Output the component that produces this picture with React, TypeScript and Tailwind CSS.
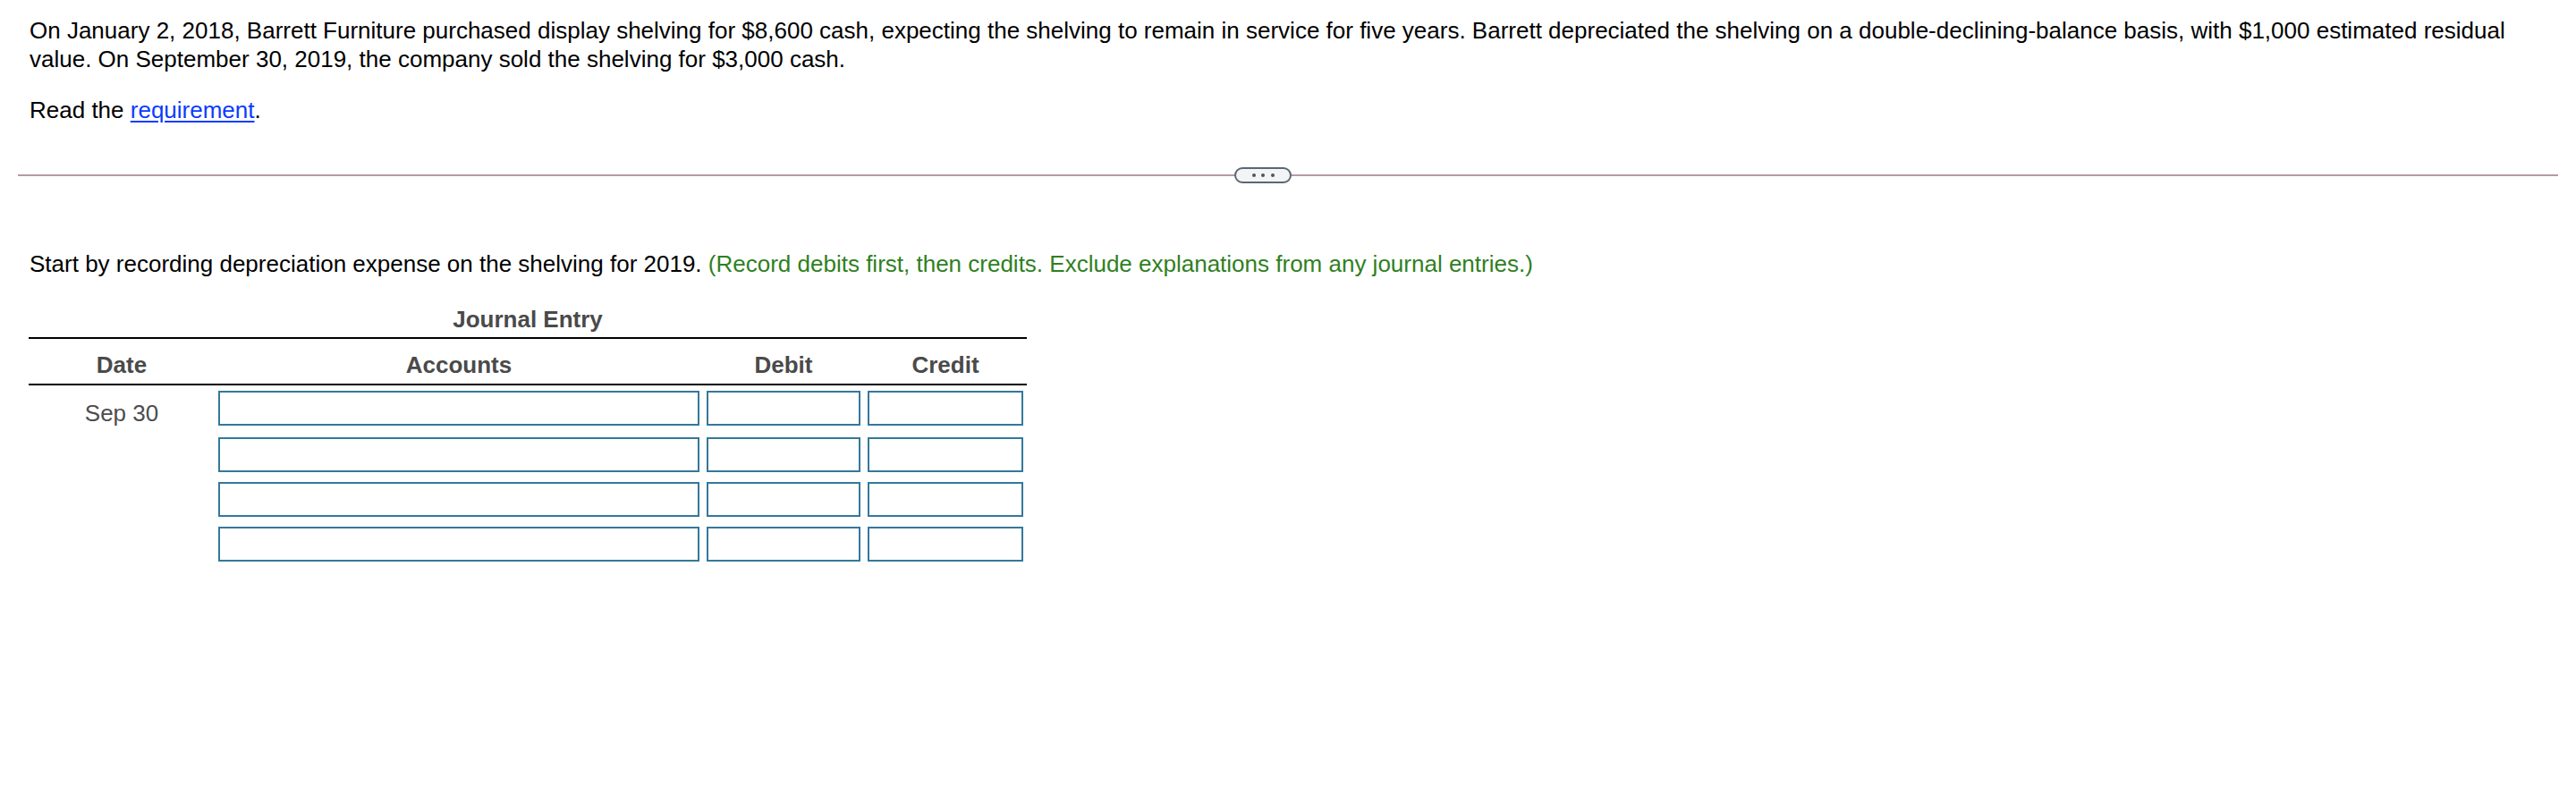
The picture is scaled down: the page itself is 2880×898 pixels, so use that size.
import * as React from 'react'

const rows = [0, 1, 2, 3]

const Box = ({ className }: { className: string }) => (
    <div className={`h-[39px] border-2 border-[#35789a] bg-white ${className}`} />
)

export default function App() {
    return (
        <div className="min-h-screen bg-white font-['Liberation_Sans',Arial,sans-serif] text-[26px] leading-[32px] text-black">
            <div className="pt-[18px] pl-[33px] pr-[32px]">
                <p>
                    On January 2, 2018, Barrett Furniture purchased display shelving for $8,600 cash, expecting the
                    shelving to remain in service for five years. Barrett depreciated the shelving on a
                    double-declining-balance basis, with $1,000 estimated residual value. On September 30, 2019, the
                    company sold the shelving for $3,000 cash.
                </p>
                <p className="mt-[25px]">
                    Read the{' '}
                    <a href="#" className="text-[#0a3cff] underline underline-offset-[3px]">
                        requirement
                    </a>
                    .
                </p>
            </div>

            <div className="mt-[47px] flex h-[20px] items-center pl-[20px] pr-[20px]">
                <div className="h-[2px] w-[1360px] bg-[#b49aa4]" />
                <button className="flex h-[18px] w-[64px] items-center justify-center gap-[6.5px] rounded-full border-2 border-[#5b6773] bg-[#f2f4f6]">
                    <span className="h-[4px] w-[4px] rounded-full bg-[#4b5563]" />
                    <span className="h-[4px] w-[4px] rounded-full bg-[#4b5563]" />
                    <span className="h-[4px] w-[4px] rounded-full bg-[#4b5563]" />
                </button>
                <div className="h-[2px] flex-1 bg-[#b49aa4]" />
            </div>

            <div className="mt-[73px] pl-[33px]">
                <p>
                    Start by recording depreciation expense on the shelving for 2019.{' '}
                    <span className="text-[#2f7f22]">
                        (Record debits first, then credits. Exclude explanations from any journal entries.)
                    </span>
                </p>
            </div>

            <div className="ml-[32px] mt-[30px] w-[1116px]">
                <div className="text-center font-bold text-[#4a4a4a]">Journal Entry</div>
                <div className="mt-[4px] h-[2px] bg-black" />
                <div className="flex pt-[13px] pb-[5px] font-bold text-[#4a4a4a]">
                    <div className="w-[208px] text-center">Date</div>
                    <div className="ml-[4px] w-[538px] text-center">Accounts</div>
                    <div className="ml-[8px] w-[172px] text-center">Debit</div>
                    <div className="ml-[8px] w-[174px] text-center">Credit</div>
                </div>
                <div className="h-[2px] bg-black" />
                <div className="flex flex-col gap-[11px] pt-[6px]">
                    {rows.map((r) => (
                        <div key={r} className="flex">
                            <div className="w-[208px] pt-[9px] text-center text-[#4d4d4d]">
                                {r === 0 ? 'Sep 30' : ''}
                            </div>
                            <Box className="ml-[4px] w-[538px]" />
                            <Box className="ml-[8px] w-[172px]" />
                            <Box className="ml-[8px] w-[174px]" />
                        </div>
                    ))}
                </div>
            </div>
        </div>
    )
}
